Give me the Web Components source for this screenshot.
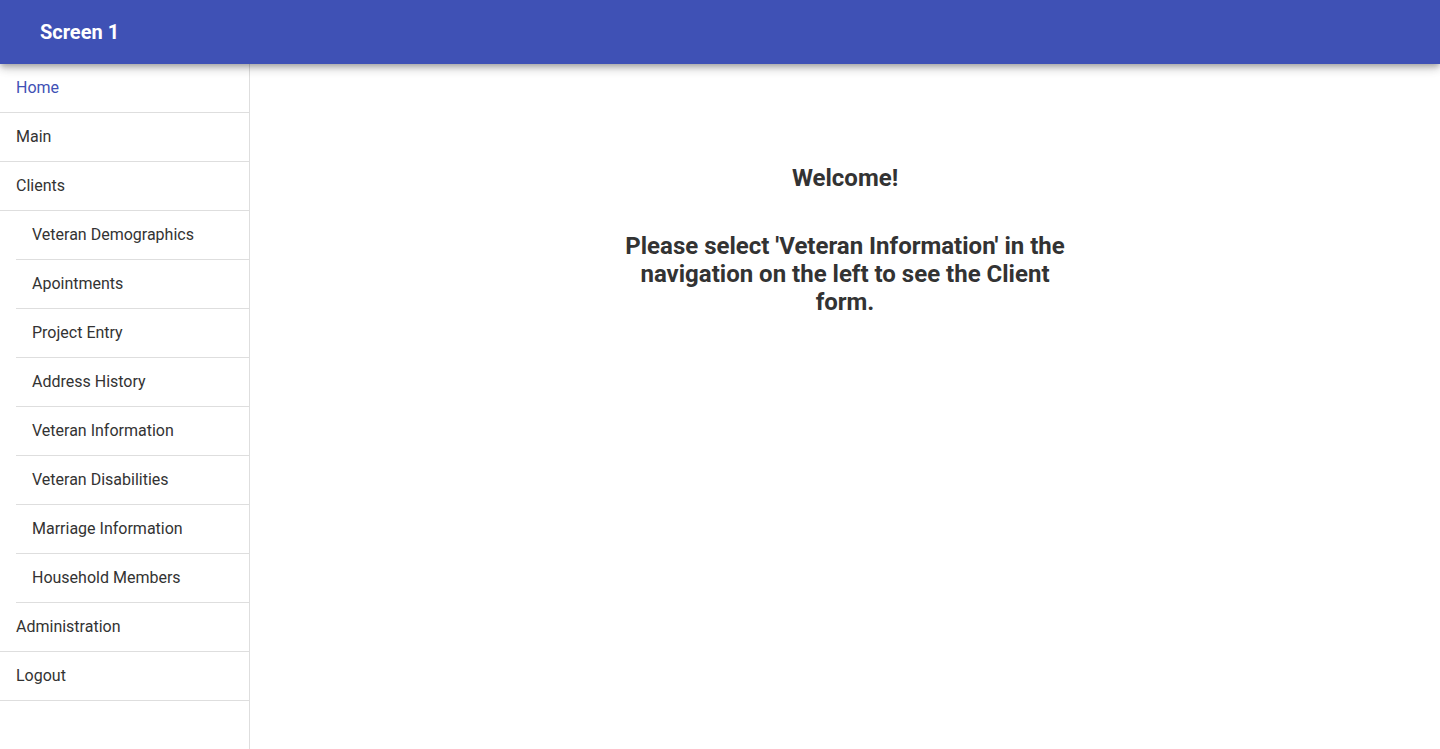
<!DOCTYPE html>
<html lang="en">
<head>
<meta charset="utf-8">
<meta name="viewport" content="width=device-width, initial-scale=1">
<title>Screen 1</title>
<style>
html, body { margin: 0; height: 100%; }
body { font-family: Roboto, "Liberation Sans", sans-serif; color: #333; background: #fff; }
</style>
</head>
<body>
<app-shell>
  <app-toolbar slot="header">Screen 1</app-toolbar>
  <nav-list slot="nav">
    <nav-item href="#home" active>Home</nav-item>
    <nav-item href="#main">Main</nav-item>
    <nav-item href="#clients">Clients</nav-item>
    <nav-item href="#demographics" nested>Veteran Demographics</nav-item>
    <nav-item href="#appointments" nested>Apointments</nav-item>
    <nav-item href="#project" nested>Project Entry</nav-item>
    <nav-item href="#address" nested>Address History</nav-item>
    <nav-item href="#information" nested>Veteran Information</nav-item>
    <nav-item href="#disabilities" nested>Veteran Disabilities</nav-item>
    <nav-item href="#marriage" nested>Marriage Information</nav-item>
    <nav-item href="#household" nested>Household Members</nav-item>
    <nav-item href="#administration">Administration</nav-item>
    <nav-item href="#logout">Logout</nav-item>
  </nav-list>
  <welcome-message>
    <span slot="title">Welcome!</span>
    <span slot="text">Please select 'Veteran Information' in the navigation on the left to see the Client form.</span>
  </welcome-message>
</app-shell>
<script>
function define(name, html, setup) {
  const template = document.createElement('template');
  template.innerHTML = html;
  customElements.define(name, class extends HTMLElement {
    constructor() {
      super();
      this.attachShadow({ mode: 'open' }).append(template.content.cloneNode(true));
    }
    connectedCallback() {
      if (setup) setup(this);
    }
  });
}

define('app-shell', `
  <style>
    :host { display: flex; flex-direction: column; min-height: 100%; }
    .body { flex: 1; display: grid; grid-template-columns: 250px 1fr; }
    main { min-width: 0; }
  </style>
  <slot name="header"></slot>
  <div class="body">
    <slot name="nav"></slot>
    <main><slot></slot></main>
  </div>`);

define('app-toolbar', `
  <style>
    :host { display: block; position: relative; z-index: 1; background: #3f51b5; color: #fff;
      box-shadow: 0 3px 5px -1px rgba(0,0,0,.2), 0 5px 8px 0 rgba(0,0,0,.14), 0 1px 14px 0 rgba(0,0,0,.12); }
    header { display: flex; align-items: center; height: 64px; padding: 0 40px; }
    h1 { margin: 0; font-size: 20px; line-height: 24px; font-weight: 700; }
  </style>
  <header><h1><slot></slot></h1></header>`);

define('nav-list', `
  <style>
    :host { display: block; box-sizing: border-box; border-right: 1px solid #dedede; }
  </style>
  <nav aria-label="Main navigation"><slot></slot></nav>`);

define('nav-item', `
  <style>
    :host { display: block; border-bottom: 1px solid #dedede; }
    :host([nested]) { margin-left: 16px; }
    a { display: flex; align-items: center; height: 48px; padding: 0 16px;
      color: inherit; text-decoration: none; font-size: 16px; line-height: 24px; }
    :host([active]) a { color: #3f51b5; }
  </style>
  <a><slot></slot></a>`, el => {
    const link = el.shadowRoot.querySelector('a');
    link.href = el.getAttribute('href');
    if (el.hasAttribute('active')) link.setAttribute('aria-current', 'page');
  });

define('welcome-message', `
  <style>
    :host { display: flex; flex-direction: column; gap: 40px; max-width: 450px; margin: 0 auto;
      padding: 100px 16px 0; text-align: center; }
    h2 { margin: 0; font-size: 24px; line-height: 28px; font-weight: 700; }
  </style>
  <h2><slot name="title"></slot></h2>
  <h2><slot name="text"></slot></h2>`);
</script>
</body>
</html>
